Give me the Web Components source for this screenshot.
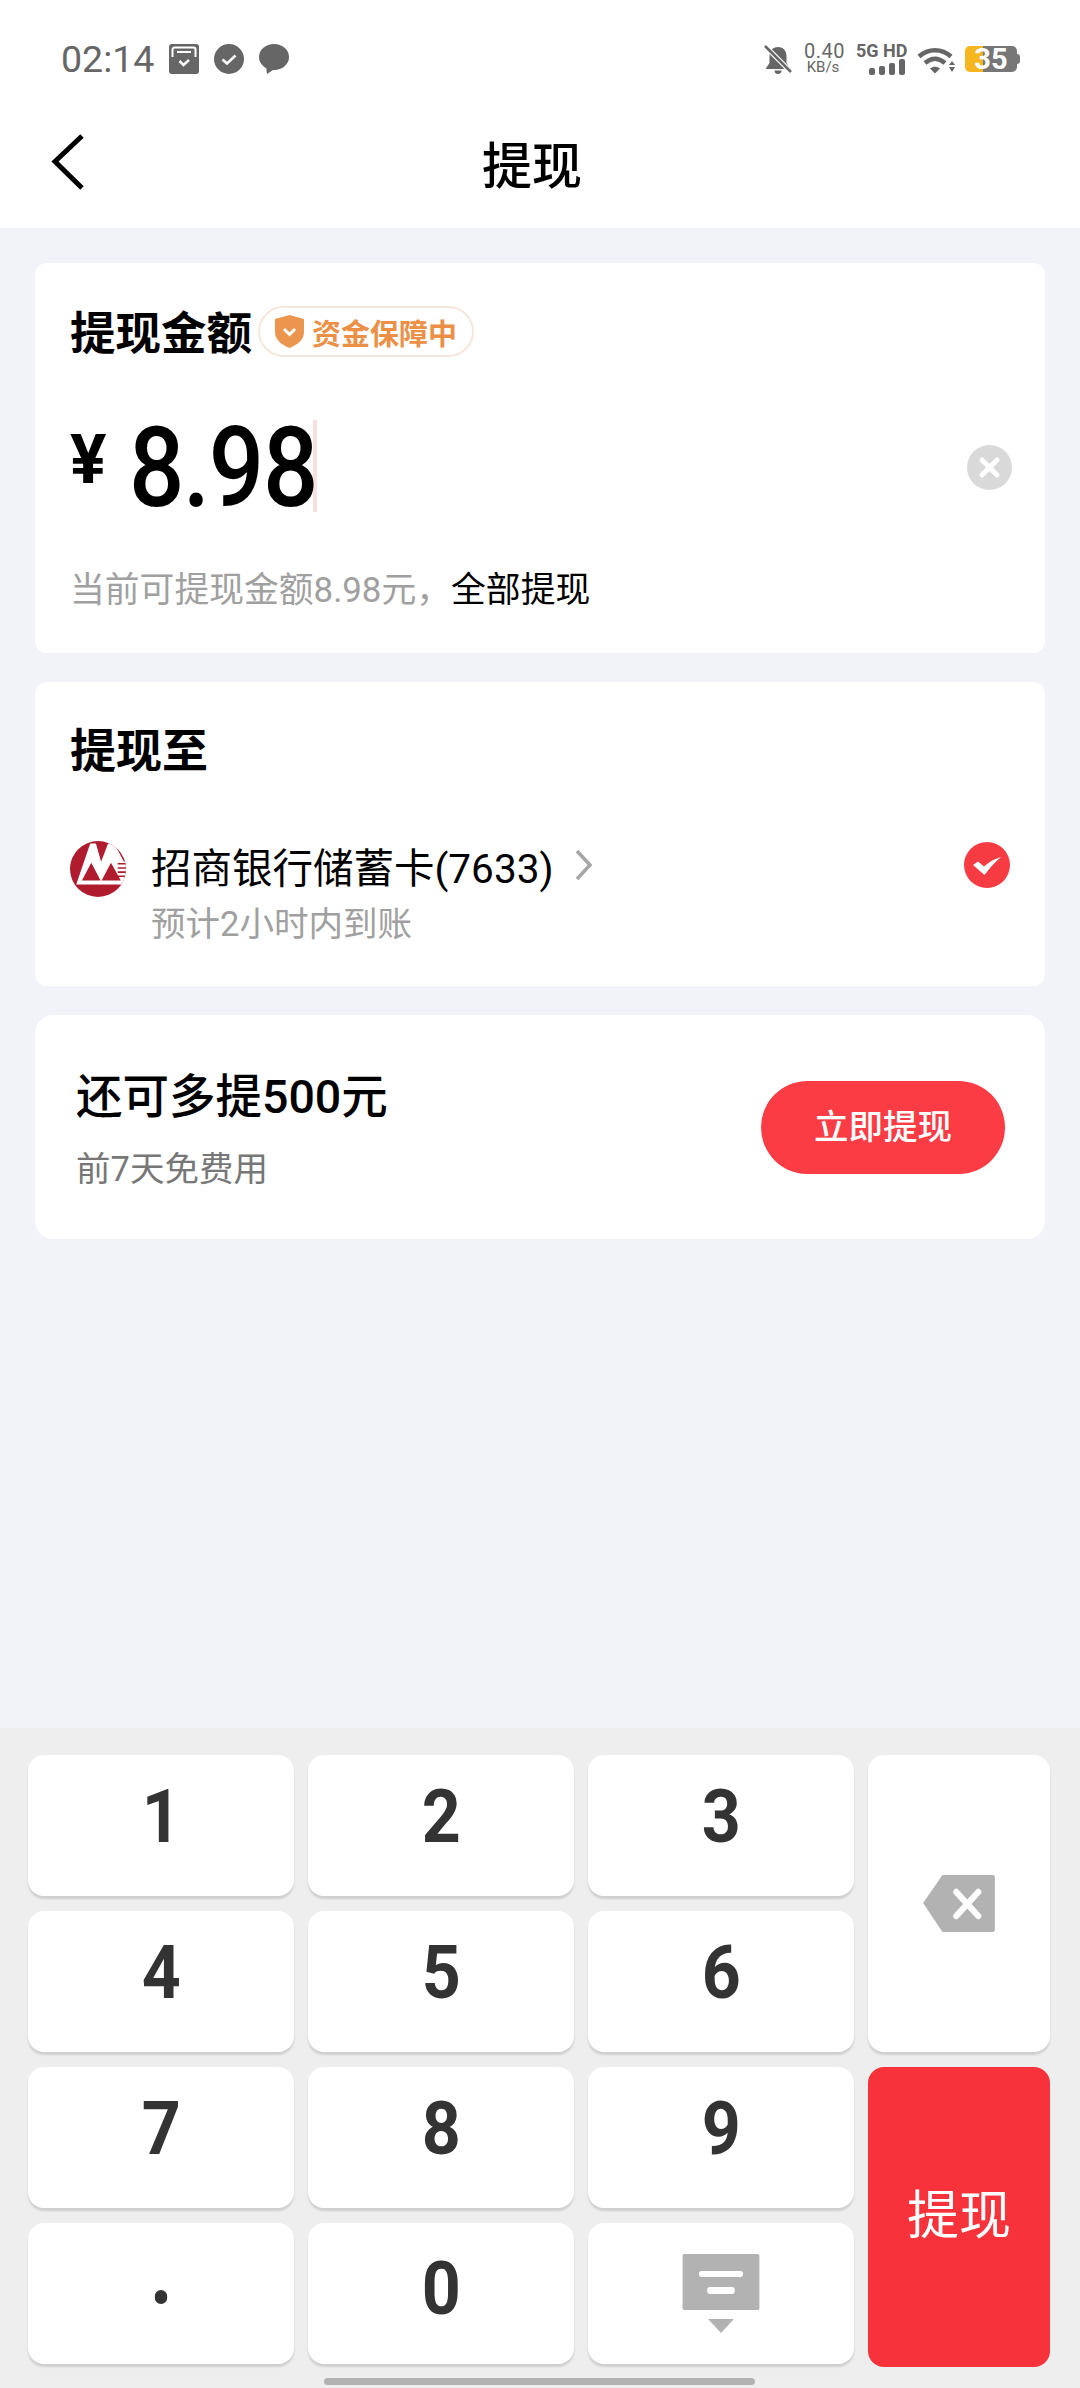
<!DOCTYPE html>
<html lang="zh-CN">
<head>
<meta charset="utf-8">
<title>提现</title>
<style>
    html, body { margin: 0; padding: 0; }
    body {
        width: 1080px;
        height: 2388px;
        overflow: hidden;
        background: #f2f3f8;
        font-family: Roboto, "Noto Sans CJK SC", sans-serif;
        display: flex;
        flex-direction: column;
    }
    main {
        display: flex;
        flex-direction: column;
        gap: 29px;
        padding: 35px 35px 0;
    }
    num-pad { margin-top: auto; }
</style>
</head>
<body>
<status-bar></status-bar>
<nav-bar>提现</nav-bar>
<main>
    <amount-card></amount-card>
    <payee-card></payee-card>
    <promo-card></promo-card>
</main>
<num-pad></num-pad>

<script>
// Status bar
class StatusBar extends HTMLElement {
    constructor() {
        super();
        this.attachShadow({ mode: "open" });
    }

    connectedCallback() {
        this.shadowRoot.innerHTML = `
            <style>
                :host {
                    display: flex;
                    align-items: center;
                    justify-content: space-between;
                    height: 118px;
                    padding: 0 60px 0 61px;
                    box-sizing: border-box;
                    background: #ffffff;
                    color: #666666;
                }
                .side { display: flex; align-items: center; }
                .time { font-size: 37.5px; line-height: 44px; width: 92px; margin-right: 16px; }
                .left svg { margin-right: 15px; display: block; }
                .left svg:last-child { margin-right: 0; }
                .net {
                    width: 38px;
                    margin: 0 14px 0 12px;
                    text-align: center;
                    white-space: nowrap;
                }
                .net b { display: block; font-weight: 400; font-size: 20px; line-height: 17px; letter-spacing: 0.5px; }
                .net i { display: block; font-style: normal; font-size: 15px; line-height: 15px; }
                .sig { width: 49px; margin-right: 12px; }
                .sig b { display: block; font-size: 18px; line-height: 16px; white-space: nowrap; }
                .sig svg { display: block; margin-left: 13px; }
                .batt {
                    position: relative;
                    width: 52px;
                    height: 26px;
                    margin: 0 3px 0 10px;
                    border-radius: 5px;
                    background: linear-gradient(90deg, #f6b61d 0 35%, #777777 35% 100%);
                    color: #ffffff;
                    font-size: 29px;
                    font-weight: 700;
                    line-height: 26px;
                    text-align: center;
                }
                .batt::after {
                    content: "";
                    position: absolute;
                    right: -3px;
                    top: 8px;
                    width: 3px;
                    height: 10px;
                    border-radius: 0 3px 3px 0;
                    background: #777777;
                }
            </style>
            <div class="side left">
                <span class="time">02:14</span>
                <svg width="30" height="30" viewBox="0 0 30 30">
                    <rect width="30" height="30" rx="3" fill="#666"/>
                    <path d="M3.5 13V5.5a2 2 0 0 1 2-2h19a2 2 0 0 1 2 2V13M8 8h14" fill="none" stroke="#fff" stroke-width="2"/>
                    <path d="M10.5 17l4 4 5.500-5" fill="none" stroke="#fff" stroke-width="2.500"/>
                </svg>
                <svg width="30" height="30" viewBox="0 0 30 30">
                    <circle cx="15" cy="15" r="15" fill="#666"/>
                    <path d="M8.500 15.500l4.500 4 8.500-8" fill="none" stroke="#fff" stroke-width="2.500"/>
                </svg>
                <svg width="30" height="30" viewBox="0 0 30 30">
                    <ellipse cx="15" cy="13" rx="15" ry="13" fill="#666"/>
                    <path d="M7 22l1 8 9-6z" fill="#666"/>
                </svg>
            </div>
            <div class="side">
                <svg width="28" height="29" viewBox="0 0 28 29">
                    <path d="M14 2c5.500 0 8.500 4 8.500 9v7l4 6H1.500l4-6v-7C5.500 6 8.500 2 14 2zM10.500 25.500h7a3.500 3.500 0 0 1-7 0z" fill="#666"/>
                    <path d="M1 1l26 26" stroke="#fff" stroke-width="5"/>
                    <path d="M1 1l26 26" stroke="#666" stroke-width="2.500"/>
                </svg>
                <div class="net"><b>0.40</b><i>KB/s</i></div>
                <div class="sig">
                    <b>5G HD</b>
                    <svg width="36" height="16" viewBox="0 0 36 16">
                        <rect x="0" y="9" width="6" height="7" rx="2" fill="#666"/>
                        <rect x="10" y="7" width="6" height="9" rx="2" fill="#666"/>
                        <rect x="20" y="4" width="6" height="12" rx="2" fill="#666"/>
                        <rect x="30" y="0" width="6" height="16" rx="2" fill="#666"/>
                    </svg>
                </div>
                <svg width="38" height="29" viewBox="0 0 38 29">
                    <path d="M2 11.500C11 3 25 3 34 11.500M8 18c6.500-5.500 13.500-5.500 20 0" fill="none" stroke="#666" stroke-width="4.500"/>
                    <path d="M13 23.500c3-2.500 7-2.500 10 0l-5 5z" fill="#666"/>
                    <path d="M32 20h6l-3-4zM32 22h6l-3 5z" fill="#666"/>
                </svg>
                <div class="batt">35</div>
            </div>
        `;
    }
}

// Title bar with back arrow
class NavBar extends HTMLElement {
    constructor() {
        super();
        this.attachShadow({ mode: "open" });
    }

    connectedCallback() {
        this.shadowRoot.innerHTML = `
            <style>
                :host {
                    display: grid;
                    grid-template-columns: 1fr auto 1fr;
                    align-items: center;
                    height: 110px;
                    padding: 0 0 22px 50px;
                    box-sizing: border-box;
                    background: #ffffff;
                    color: #000000;
                }
                svg { display: block; margin-top: -1px; }
                .title { font-size: 50px; font-weight: 500; margin-left: -66px; }
            </style>
            <svg width="36" height="56" viewBox="0 0 36 56">
                <path d="M32 2L5 27.500 32 54" fill="none" stroke="#000" stroke-width="5"/>
            </svg>
            <div class="title"><slot></slot></div>
        `;
    }
}

// Amount card
class AmountCard extends HTMLElement {
    constructor() {
        super();
        this.attachShadow({ mode: "open" });
    }

    connectedCallback() {
        this.shadowRoot.innerHTML = `
            <style>
                :host {
                    display: block;
                    height: 390px;
                    padding: 41px 35px 0;
                    box-sizing: border-box;
                    background: #ffffff;
                    border-radius: 12px;
                }
                .head { display: flex; align-items: center; height: 52px; }
                h3 { margin: 0; font-size: 45.500px; font-weight: 700; color: #000000; white-space: nowrap; }
                .badge {
                    display: flex;
                    align-items: center;
                    gap: 8px;
                    height: 51px;
                    margin: 3px 0 0 6px;
                    padding: 0 15px 0 15px;
                    box-sizing: border-box;
                    border: 2px solid #f5e7da;
                    border-radius: 26px;
                    color: #ec8f47;
                    font-size: 29px;
                    font-weight: 700;
                    white-space: nowrap;
                }
                .badge svg { display: block; }
                .row { display: flex; align-items: flex-start; height: 100px; margin-top: 61px; position: relative; }
                .yen { font-size: 68px; font-weight: 700; line-height: 62px; width: 59px; margin-top: 12px; color: #000; }
                .val {
                    font-size: 112px;
                    font-weight: 500;
                    line-height: 92px;
                    margin-top: 5px;
                    letter-spacing: -1.5px;
                    color: #000000;
                    white-space: nowrap;
                    transform: scaleX(.87);
                    transform-origin: left center;
                    width: 184px;
                }
                .caret { width: 4px; height: 92px; margin-top: 3px; background: #f8e0e0; }
                .clear { position: absolute; right: -2px; top: 28px; display: block; }
                .hint { margin-top: 50px; font-size: 34.8px; line-height: 46px; color: #a0a0a0; white-space: nowrap; }
                .hint span { color: #000000; }
            </style>
            <div class="head">
                <h3>提现金额</h3>
                <div class="badge">
                    <svg width="29" height="33" viewBox="0 0 29 33">
                        <path d="M14.500 0L29 4v13c0 8-7 13-14.500 16C7 30 0 25 0 17V4z" fill="#ec954f"/>
                        <path d="M9 14l5.500 5.500L20 14" fill="none" stroke="#fff" stroke-width="3"/>
                    </svg>
                    资金保障中
                </div>
            </div>
            <div class="row">
                <div class="yen">¥</div>
                <div class="val">8.98</div>
                <div class="caret"></div>
                <svg class="clear" width="45" height="45" viewBox="0 0 45 45">
                    <circle cx="22.500" cy="22.500" r="22.500" fill="#d9d9d9"/>
                    <path d="M15 15l15 15M30 15L15 30" stroke="#fff" stroke-width="5" stroke-linecap="round"/>
                </svg>
            </div>
            <div class="hint">当前可提现金额8.98元，<span>全部提现</span></div>
        `;
    }
}

// Bank card selection
class PayeeCard extends HTMLElement {
    constructor() {
        super();
        this.attachShadow({ mode: "open" });
    }

    connectedCallback() {
        this.shadowRoot.innerHTML = `
            <style>
                :host {
                    display: block;
                    height: 304px;
                    padding: 43px 35px 0 35px;
                    box-sizing: border-box;
                    background: #ffffff;
                    border-radius: 12px;
                }
                h3 { margin: 0; font-size: 46px; font-weight: 700; line-height: 52px; color: #000000; }
                .row { display: flex; align-items: flex-start; margin-top: 63px; }
                .logo { display: block; margin-top: 1px; }
                .info { margin: -3px 0 0 25px; flex: 1; }
                .name { display: flex; align-items: center; height: 56px; font-size: 40.5px; color: #000000; white-space: nowrap; }
                .name svg { display: block; margin-left: 21px; }
                .sub { font-size: 34.5px; line-height: 46px; margin-top: 8px; color: #a0a0a0; }
                .check { display: block; margin-top: 2px; }
            </style>
            <h3>提现至</h3>
            <div class="row">
                <svg class="logo" width="56" height="56" viewBox="0 0 54 54">
                    <defs><clipPath id="c"><circle cx="27" cy="27" r="27"/></clipPath></defs>
                    <circle cx="27" cy="27" r="27" fill="#b01c2e"/>
                    <g clip-path="url(#c)">
                        <path d="M19.500 2.500H25L30 20l6.700-17.500h6L52 20h2v16l-1 6H6z" fill="#fff"/>
                        <path d="M11.500 38l9-17L29.500 38zM30.500 38l9-17L49 38z" fill="#b01c2e"/>
                        <path d="M46 22h8M46 26h8M46 30h8M46 34h8" stroke="#b01c2e" stroke-width="1.500"/>
                    </g>
                </svg>
                <div class="info">
                    <div class="name">招商银行储蓄卡(7633)
                        <svg width="18" height="32" viewBox="0 0 18 32">
                            <path d="M2 2l13 14L2 30" fill="none" stroke="#a6a6a6" stroke-width="3.500"/>
                        </svg>
                    </div>
                    <div class="sub">预计2小时内到账</div>
                </div>
                <svg class="check" width="46" height="46" viewBox="0 0 46 46">
                    <circle cx="23" cy="23" r="23" fill="#f63c42"/>
                    <path d="M9 23l5-3.500 6 5C25 20 30 17 37 15 30 21 25 27 20.500 33z" fill="#fff"/>
                </svg>
            </div>
        `;
    }
}

// Extra amount promo
class PromoCard extends HTMLElement {
    constructor() {
        super();
        this.attachShadow({ mode: "open" });
    }

    connectedCallback() {
        this.shadowRoot.innerHTML = `
            <style>
                :host {
                    display: flex;
                    align-items: center;
                    justify-content: space-between;
                    height: 224px;
                    padding: 0 40px 0 41px;
                    box-sizing: border-box;
                    background: #ffffff;
                    border-radius: 18px;
                }
                .text { padding-top: 4px; }
                .big { font-size: 46.5px; font-weight: 500; line-height: 60px; color: #000000; white-space: nowrap; }
                .small { margin-top: 19px; font-size: 34.5px; line-height: 46px; color: #777777; white-space: nowrap; }
                .btn {
                    width: 244px;
                    height: 93px;
                    border-radius: 47px;
                    background: #fb3c45;
                    color: #ffffff;
                    font-size: 34.5px;
                    font-weight: 500;
                    line-height: 93px;
                    text-align: center;
                }
            </style>
            <div class="text">
                <div class="big">还可多提500元</div>
                <div class="small">前7天免费用</div>
            </div>
            <div class="btn">立即提现</div>
        `;
    }
}

// One key of the keypad
class NumKey extends HTMLElement {
    constructor() {
        super();
        this.attachShadow({ mode: "open" });
    }

    connectedCallback() {
        this.shadowRoot.innerHTML = `
            <style>
                :host {
                    display: flex;
                    align-items: center;
                    justify-content: center;
                    background: #ffffff;
                    border-radius: 16px;
                    box-shadow: 0 3px 2px #cfcfcf;
                    color: #333333;
                    font-size: 74px;
                    font-weight: 700;
                    line-height: 1;
                    padding-bottom: 18px;
                    box-sizing: border-box;
                    min-width: 0;
                }
                :host([plain]) { padding-bottom: 0; }
                :host([accent]) {
                    background: #f8323a;
                    box-shadow: none;
                    color: #ffffff;
                    font-size: 52px;
                    font-weight: 400;
                    padding-bottom: 0;
                    height: 300px;
                }
                span { display: block; transform: scaleX(.92); }
                :host([accent]) span { transform: none; }
            </style>
            <span><slot></slot></span>
        `;
    }
}

// Keypad
class NumPad extends HTMLElement {
    constructor() {
        super();
        this.attachShadow({ mode: "open" });
    }

    connectedCallback() {
        const digits = ["1", "2", "3", "4", "5", "6", "7", "8", "9"];
        const keys = digits.map(d => `<num-key>${d}</num-key>`).join("");

        this.shadowRoot.innerHTML = `
            <style>
                :host {
                    display: block;
                    height: 660px;
                    padding: 27px 30px 0 28px;
                    box-sizing: border-box;
                    background: #eeeeee;
                }
                .wrap {
                    display: grid;
                    grid-template-columns: 266px 266px 266px 182px;
                    grid-template-rows: repeat(4, 141px);
                    column-gap: 14px;
                    row-gap: 15px;
                }
                .keys { display: contents; }
                .del { grid-column: 4; grid-row: 1 / span 2; }
                .ok { grid-column: 4; grid-row: 3 / span 2; }
                .r4 { grid-row: 4; }
                .zero { padding-bottom: 10px; }
                .dot { margin-top: 6px; }
                .home {
                    width: 431px;
                    height: 7px;
                    margin: 14px 0 3px 296px;
                    border-radius: 4px;
                    background: #b2b2b2;
                }
                svg { display: block; }
            </style>
            <div class="wrap">
                <div class="keys">${keys}</div>
                <num-key class="del" plain>
                    <svg width="78" height="57" viewBox="0 0 78 57">
                        <path d="M21 0h55a2 2 0 0 1 2 2v53a2 2 0 0 1-2 2H21L0 28z" fill="#b2b2b2"/>
                        <path d="M36 17l24 24M60 17L36 41" stroke="#fff" stroke-width="6.500" stroke-linecap="round"/>
                    </svg>
                </num-key>
                <num-key class="ok" accent>提现</num-key>
                <num-key class="r4" plain>
                    <svg class="dot" width="14" height="14" viewBox="0 0 14 14"><circle cx="7" cy="7" r="7" fill="#333"/></svg>
                </num-key>
                <num-key class="r4 zero">0</num-key>
                <num-key class="r4" plain>
                    <svg width="84" height="79" viewBox="0 0 84 79">
                        <rect width="84" height="56" rx="2" fill="#b2b2b2"/>
                        <rect x="18" y="17" width="48" height="6" rx="3" fill="#fff"/>
                        <rect x="27" y="33" width="30" height="7" rx="3" fill="#fff"/>
                        <path d="M28 65h28L42 79z" fill="#b2b2b2"/>
                    </svg>
                </num-key>
            </div>
            <div class="home"></div>
        `;
    }
}

customElements.define("status-bar", StatusBar);
customElements.define("nav-bar", NavBar);
customElements.define("amount-card", AmountCard);
customElements.define("payee-card", PayeeCard);
customElements.define("promo-card", PromoCard);
customElements.define("num-key", NumKey);
customElements.define("num-pad", NumPad);
</script>
</body>
</html>
